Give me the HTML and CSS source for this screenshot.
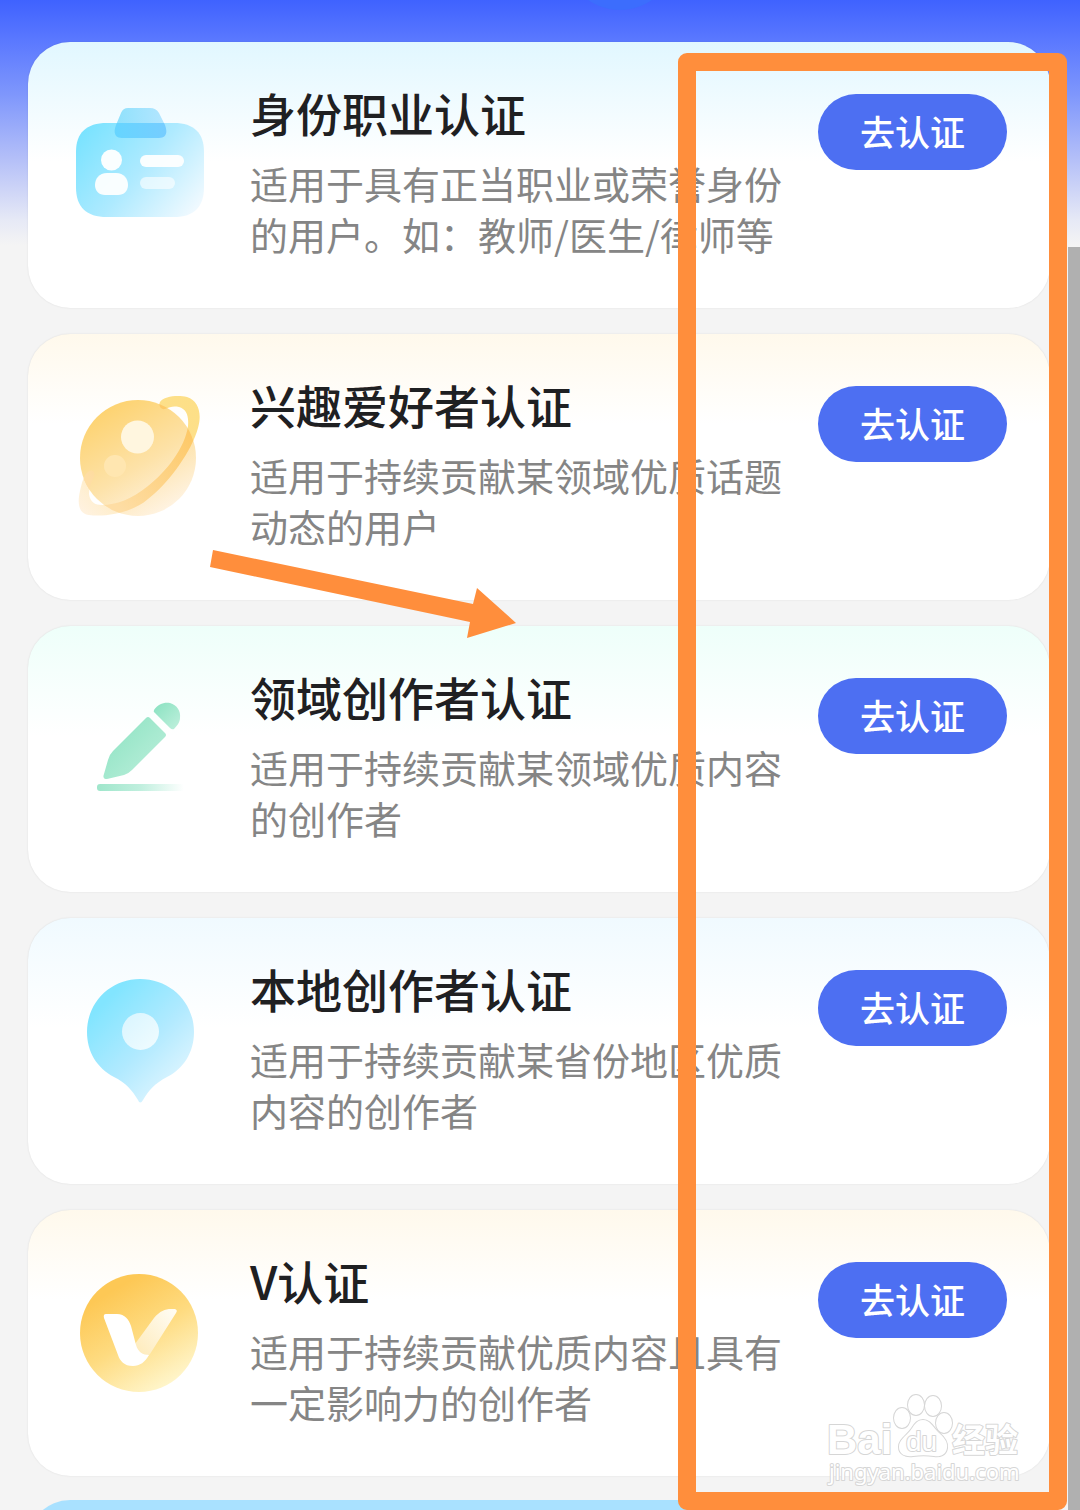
FILE: index.html
```html
<!DOCTYPE html>
<html lang="zh-CN">
<head>
    <meta charset="UTF-8">
    <meta name="viewport" content="width=device-width, initial-scale=1.0">
    <title>认证</title>
    <link rel="stylesheet" href="styles.css">
</head>
<body>

    <div class="page">
        <div class="bubble"></div>

        <main class="list">
            <!-- 身份职业认证 -->
            <section class="card card-cyan">
                <svg class="icon" viewBox="0 0 140 140" aria-hidden="true">
                    <defs>
                        <linearGradient id="id-body" x1="0" y1="0.2" x2="1" y2="0.8">
                            <stop offset="0" stop-color="#7be3ff"/>
                            <stop offset="0.5" stop-color="#aeeaff"/>
                            <stop offset="1" stop-color="#eff9ff"/>
                        </linearGradient>
                        <linearGradient id="id-clip" x1="0" y1="0" x2="1" y2="0">
                            <stop offset="0" stop-color="#8fe1fc"/>
                            <stop offset="1" stop-color="#b4e6ff"/>
                        </linearGradient>
                        <linearGradient id="id-overlap" x1="0" y1="0" x2="1" y2="0">
                            <stop offset="0" stop-color="#66d5ff"/>
                            <stop offset="1" stop-color="#76cdff"/>
                        </linearGradient>
                        <clipPath id="id-area"><rect x="0" y="31" width="140" height="40"/></clipPath>
                    </defs>
                    <path d="M37 31H104C124 31 134 41 134 60V95C134 115 124 125 104 125H37C16 125 6 115 6 95V60C6 41 16 31 37 31Z" fill="url(#id-body)"/>
                    <path d="M58 16H80Q86 16 89 21L95 33C98 41 96 46 89 46H52C45 46 43 41 46 33L51 21Q53 16 58 16Z" fill="url(#id-clip)"/>
                    <path d="M58 16H80Q86 16 89 21L95 33C98 41 96 46 89 46H52C45 46 43 41 46 33L51 21Q53 16 58 16Z" fill="url(#id-overlap)" clip-path="url(#id-area)"/>
                    <circle cx="41.5" cy="68" r="10.5" fill="#fff" opacity="0.95"/>
                    <path d="M37 81H46C54 81 58 87 58 93C58 99 54 103 48 103H35C29 103 25 99 25 93C25 87 29 81 37 81Z" fill="#fff" opacity="0.93"/>
                    <rect x="70" y="63" width="44" height="12" rx="6" fill="#fff" opacity="0.93"/>
                    <rect x="70" y="85" width="35" height="12" rx="6" fill="#fff" opacity="0.6"/>
                </svg>
                <div class="info">
                    <h2 class="title">身份职业认证</h2>
                    <p class="desc">适用于具有正当职业或荣誉身份的用户。如：教师/医生/律师等</p>
                </div>
                <button class="button" type="button">去认证</button>
            </section>

            <!-- 兴趣爱好者认证 -->
            <section class="card card-cream">
                <svg class="icon" viewBox="0 0 140 140" aria-hidden="true">
                    <defs>
                        <linearGradient id="planet-body" x1="0.2" y1="0.05" x2="0.75" y2="1">
                            <stop offset="0" stop-color="#fdd26e"/>
                            <stop offset="0.55" stop-color="#fde2a8"/>
                            <stop offset="1" stop-color="#fff5e8"/>
                        </linearGradient>
                        <linearGradient id="planet-ring" x1="1" y1="0" x2="0" y2="1">
                            <stop offset="0" stop-color="#fddf86"/>
                            <stop offset="0.35" stop-color="#fde08c"/>
                            <stop offset="1" stop-color="#fff3e4"/>
                        </linearGradient>
                        <linearGradient id="planet-band" x1="1" y1="0" x2="0" y2="1">
                            <stop offset="0.2" stop-color="#fdc968"/>
                            <stop offset="0.8" stop-color="#fedda4"/>
                        </linearGradient>
                        <clipPath id="planet-area"><circle cx="68" cy="74" r="58"/></clipPath>
                    </defs>
                    <path d="M90 18C94 12 108 11 117 13C129 17 132 30 128 44C122 66 100 98 78 115C61 130 33 133 19 131C9 130 7 120 10 107C12 98 14 91 18 88C22 84 26 89 24 93C21 98 19 104 19 110C20 118 25 121 32 121C46 121 62 115 78 102C96 88 115 64 118 42C119 31 116 25 109 23C103 22 100 23 95 25C91 26 88 22 90 18Z" fill="url(#planet-ring)"/>
                    <circle cx="68" cy="74" r="58" fill="url(#planet-body)"/>
                    <path d="M90 18C94 12 108 11 117 13C129 17 132 30 128 44C122 66 100 98 78 115C61 130 33 133 19 131C9 130 7 120 10 107C12 98 14 91 18 88C22 84 26 89 24 93C21 98 19 104 19 110C20 118 25 121 32 121C46 121 62 115 78 102C96 88 115 64 118 42C119 31 116 25 109 23C103 22 100 23 95 25C91 26 88 22 90 18Z" fill="url(#planet-band)" clip-path="url(#planet-area)"/>
                    <circle cx="67.5" cy="53" r="16.5" fill="#fff6df"/>
                    <circle cx="45" cy="82" r="11" fill="#ffe6b0"/>
                </svg>
                <div class="info">
                    <h2 class="title">兴趣爱好者认证</h2>
                    <p class="desc">适用于持续贡献某领域优质话题动态的用户</p>
                </div>
                <button class="button" type="button">去认证</button>
            </section>

            <!-- 领域创作者认证 -->
            <section class="card card-mint">
                <svg class="icon" viewBox="0 0 140 140" aria-hidden="true">
                    <defs>
                        <linearGradient id="pen-body" x1="0" y1="0" x2="1" y2="1">
                            <stop offset="0.1" stop-color="#8ee3c3"/>
                            <stop offset="1" stop-color="#c0f0dd"/>
                        </linearGradient>
                        <linearGradient id="pen-line" x1="0" y1="0" x2="1" y2="0">
                            <stop offset="0" stop-color="#9fe6cb"/>
                            <stop offset="0.5" stop-color="#c0efde"/>
                            <stop offset="1" stop-color="#fff"/>
                        </linearGradient>
                    </defs>
                    <path d="M76 42Q78 40 80 42L95 57Q97 59 95 61L62 94Q58 98 54 99L37 103Q32 103 34 98L38 84Q39 79 43 75Z" fill="url(#pen-body)"/>
                    <path d="M84 34C88 28 94 26 100 27C107 29 111 35 110 42C110 46 107 50 104 53Q102 54 100 52L85 37Q83 36 84 34Z" fill="url(#pen-body)"/>
                    <rect x="27" y="108" width="87" height="7" rx="3" fill="url(#pen-line)"/>
                </svg>
                <div class="info">
                    <h2 class="title">领域创作者认证</h2>
                    <p class="desc">适用于持续贡献某领域优质内容的创作者</p>
                </div>
                <button class="button" type="button">去认证</button>
            </section>

            <!-- 本地创作者认证 -->
            <section class="card card-sky">
                <svg class="icon" viewBox="0 0 140 140" aria-hidden="true">
                    <defs>
                        <linearGradient id="pin-body" x1="0.1" y1="0.1" x2="0.8" y2="0.9">
                            <stop offset="0.1" stop-color="#82e5ff"/>
                            <stop offset="0.6" stop-color="#b2eaff"/>
                            <stop offset="1" stop-color="#def5ff"/>
                        </linearGradient>
                        <linearGradient id="pin-hole" x1="0" y1="0" x2="1" y2="1">
                            <stop offset="0" stop-color="#d8f5ff"/>
                            <stop offset="1" stop-color="#f1fcff"/>
                        </linearGradient>
                    </defs>
                    <path d="M70 11C101 11 124 35 124 64C124 85 113 101 97 109C84 116 79 122 73 132Q70 137 68 132C62 122 56 115 44 109C27 100 17 84 17 64C17 35 40 11 70 11Z" fill="url(#pin-body)"/>
                    <circle cx="70.5" cy="63.5" r="18.5" fill="url(#pin-hole)"/>
                </svg>
                <div class="info">
                    <h2 class="title">本地创作者认证</h2>
                    <p class="desc">适用于持续贡献某省份地区优质内容的创作者</p>
                </div>
                <button class="button" type="button">去认证</button>
            </section>

            <!-- V认证 -->
            <section class="card card-cream">
                <svg class="icon" viewBox="0 0 140 140" aria-hidden="true">
                    <defs>
                        <linearGradient id="v-body" x1="0.25" y1="0.1" x2="0.75" y2="0.95">
                            <stop offset="0.05" stop-color="#fdc855"/>
                            <stop offset="0.5" stop-color="#fedb80"/>
                            <stop offset="1" stop-color="#fff6cc"/>
                        </linearGradient>
                        <linearGradient id="v-arm" x1="1" y1="0" x2="0" y2="1">
                            <stop offset="0" stop-color="#fffdf6"/>
                            <stop offset="1" stop-color="#feeab8"/>
                        </linearGradient>
                    </defs>
                    <circle cx="69" cy="73" r="59" fill="url(#v-body)"/>
                    <path d="M84 58C90 51 95 49 101 49H105Q108 50 106 53L80 94C76 99 67 95 65 84Z" fill="url(#v-arm)"/>
                    <path d="M36 54H47C55 54 59 60 61 66L66 85C68 92 73 95 79 95C75 102 70 106 63 106C54 106 50 101 48 95L34 58Q33 54 36 54Z" fill="#fff"/>
                </svg>
                <div class="info">
                    <h2 class="title">V认证</h2>
                    <p class="desc">适用于持续贡献优质内容且具有一定影响力的创作者</p>
                </div>
                <button class="button" type="button">去认证</button>
            </section>
        </main>

        <div class="next-card"></div>
        <div class="scrollbar"></div>

        <!-- 标注：箭头和方框 -->
        <div class="mark-box"></div>
        <svg class="mark-arrow" viewBox="0 0 308 92" aria-hidden="true">
            <path d="M4 1L264 55L268 39L307 74L258 89L261 73L1 18Z" fill="#ff8e3c"/>
        </svg>

        <!-- 水印 -->
        <svg class="watermark" viewBox="0 0 200 100" role="img" aria-label="Baidu经验">
            <g class="paw">
                <ellipse cx="76" cy="26" rx="8" ry="10"/>
                <ellipse cx="90" cy="13" rx="8" ry="10"/>
                <ellipse cx="107" cy="14" rx="8" ry="10"/>
                <ellipse cx="118" cy="31" rx="8" ry="10"/>
                <path d="M97 28C104 28 107 35 112 40C118 45 122 50 121 56C120 63 114 65 108 64C101 63 94 63 87 64C79 65 73 62 73 55C73 48 79 45 84 39C88 34 90 28 97 28Z"/>
            </g>
            <text class="mark-logo" x="1" y="62">Bai</text>
            <text class="mark-du" x="80" y="59">du</text>
            <text class="mark-cn" x="126" y="60">经验</text>
            <text class="mark-url" x="3" y="88">jingyan.baidu.com</text>
        </svg>
    </div>

</body>
</html>
```

FILE: styles.css
```css
body {
    margin: 0;
    background-color: #f4f4f4;
    font-family: "Noto Sans CJK SC", sans-serif;
}

.page {
    position: relative;
    box-sizing: border-box;
    height: 100vh;
    padding: 42px 30px 0 28px;
    overflow: hidden;
    background: linear-gradient(#3f62ff 0, #5a78ff 40px, #7f97fc 95px, #b5c0f8 160px, #e6e9f6 220px, #f4f4f4 245px);
}

.bubble {
    position: absolute;
    top: -102px;
    left: 564px;
    width: 112px;
    height: 112px;
    border-radius: 50%;
    background-color: #3c6dfd;
}

.list {
    display: flex;
    flex-direction: column;
    gap: 26px;
}

.card {
    display: flex;
    align-items: flex-start;
    gap: 20px;
    padding: 40px 43px 49px 42px;
    border-radius: 42px;
    background-color: #fff;
    box-shadow: 0 0 2px rgba(0, 0, 0, 0.1);
}

.card-cyan {
    background-image: linear-gradient(#e1f7ff, #fff 120px);
}

.card-cream {
    background-image: linear-gradient(#fff9ec, #fff 90px);
}

.card-mint {
    background-image: linear-gradient(#eefffa, #fff 110px);
}

.card-sky {
    background-image: linear-gradient(#f0faff, #fff 110px);
}

.icon {
    flex: none;
    width: 140px;
    height: 140px;
    margin: 10px 20px 0 0;
}

.info {
    flex: 1;
}

.title {
    margin: 0 0 15px;
    font-size: 46px;
    font-weight: 500;
    line-height: 60px;
    color: #1f2022;
}

.desc {
    margin: 0;
    font-size: 38px;
    line-height: 51px;
    color: #858585;
}

.button {
    flex: none;
    width: 189px;
    height: 76px;
    margin-top: 12px;
    padding: 0 0 4px;
    border: none;
    border-radius: 38px;
    background-color: #4d6ff2;
    color: #fff;
    font-family: inherit;
    font-size: 35px;
    font-weight: 500;
    cursor: pointer;
}

/* 下一张卡片，只露出顶部 */
.next-card {
    height: 266px;
    margin-top: 24px;
    border-radius: 42px;
    background-color: #a9e1ff;
}

.scrollbar {
    position: absolute;
    top: 247px;
    right: 0;
    bottom: 0;
    width: 12px;
    background-color: #b0b0b0;
}

.mark-box {
    position: absolute;
    top: 53px;
    right: 13px;
    bottom: 0;
    width: 353px;
    border: 18px solid #ff8e3c;
    border-radius: 9px;
}

.mark-arrow {
    position: absolute;
    top: 549px;
    left: 209px;
    width: 308px;
}

.watermark {
    position: absolute;
    right: 54px;
    bottom: 18px;
    width: 200px;
    height: 100px;
}

.watermark text,
.paw {
    fill: #fff;
    stroke: #d6d6d6;
    stroke-width: 2px;
    stroke-linejoin: round;
    paint-order: stroke;
}

.watermark .mark-logo {
    font: bold 42px "Liberation Sans", sans-serif;
}

.watermark .mark-du {
    font: 28px "Liberation Sans", sans-serif;
}

.watermark .mark-cn {
    font: bold 33px "Noto Sans CJK SC", sans-serif;
}

.watermark .mark-url {
    font: 22px "Noto Sans", sans-serif;
}
```
